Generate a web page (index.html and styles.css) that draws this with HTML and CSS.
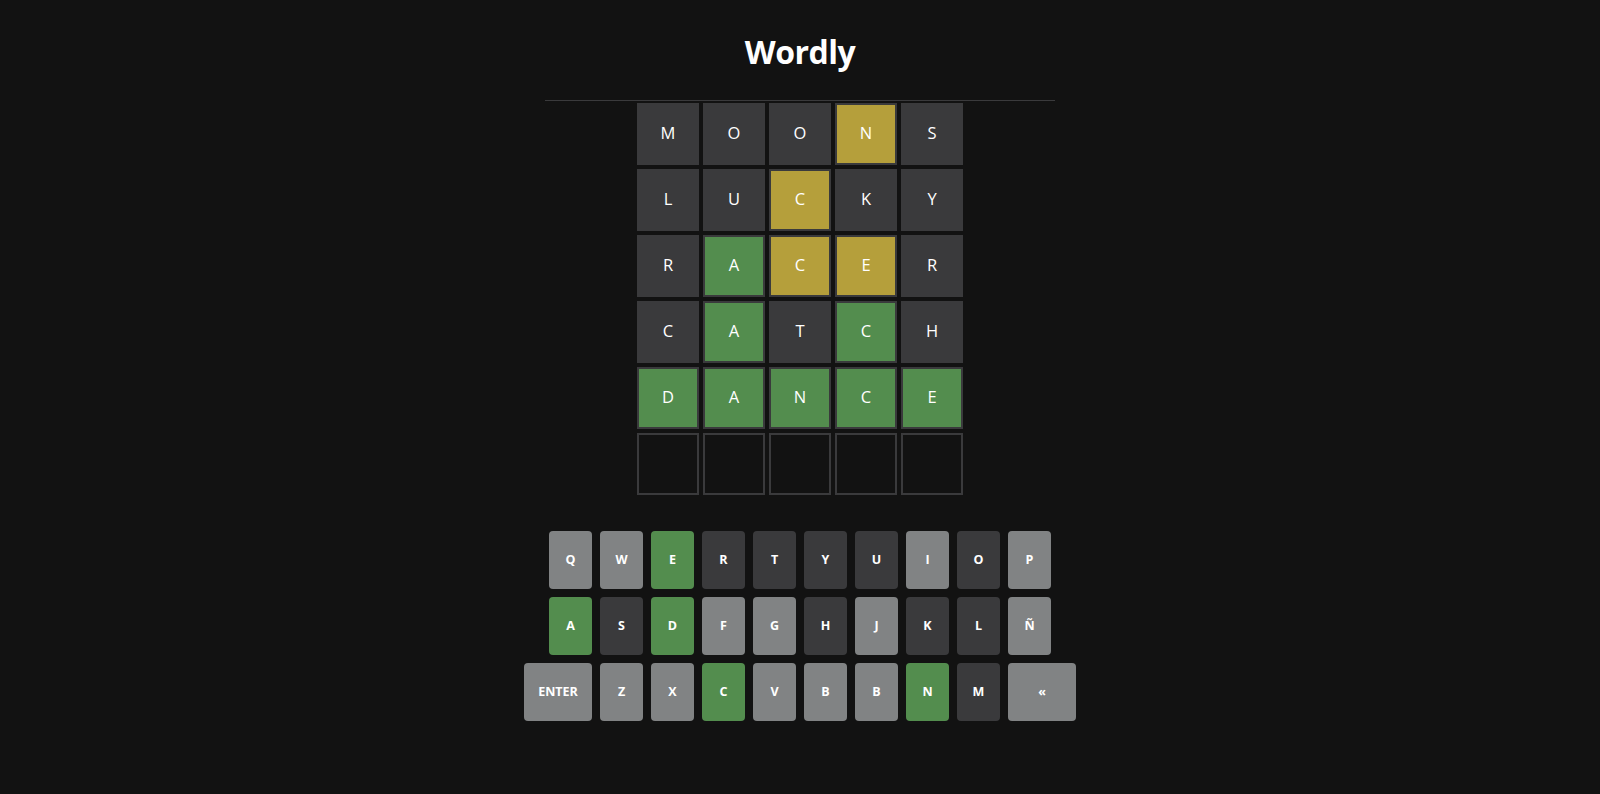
FILE: index.html
```html
<!DOCTYPE html>
<html lang="en">
<head>
<meta charset="utf-8">
<title>Wordly</title>
<link rel="stylesheet" href="styles.css">
</head>
<body>
<div class="app">
  <header class="header">
    <h1 class="title">Wordly</h1>
  </header>
  <main class="board">
    <div class="row">
      <div class="tile absent">M</div><div class="tile absent">O</div><div class="tile absent">O</div><div class="tile present">N</div><div class="tile absent">S</div>
    </div>
    <div class="row">
      <div class="tile absent">L</div><div class="tile absent">U</div><div class="tile present">C</div><div class="tile absent">K</div><div class="tile absent">Y</div>
    </div>
    <div class="row">
      <div class="tile absent">R</div><div class="tile correct">A</div><div class="tile present">C</div><div class="tile present">E</div><div class="tile absent">R</div>
    </div>
    <div class="row">
      <div class="tile absent">C</div><div class="tile correct">A</div><div class="tile absent">T</div><div class="tile correct">C</div><div class="tile absent">H</div>
    </div>
    <div class="row">
      <div class="tile correct">D</div><div class="tile correct">A</div><div class="tile correct">N</div><div class="tile correct">C</div><div class="tile correct">E</div>
    </div>
    <div class="row">
      <div class="tile"></div><div class="tile"></div><div class="tile"></div><div class="tile"></div><div class="tile"></div>
    </div>
  </main>
  <section class="keyboard">
    <div class="krow">
      <button class="key">Q</button><button class="key">W</button><button class="key k-correct">E</button><button class="key k-absent">R</button><button class="key k-absent">T</button><button class="key k-absent">Y</button><button class="key k-absent">U</button><button class="key">I</button><button class="key k-absent">O</button><button class="key">P</button>
    </div>
    <div class="krow">
      <button class="key k-correct">A</button><button class="key k-absent">S</button><button class="key k-correct">D</button><button class="key">F</button><button class="key">G</button><button class="key k-absent">H</button><button class="key">J</button><button class="key k-absent">K</button><button class="key k-absent">L</button><button class="key">Ñ</button>
    </div>
    <div class="krow">
      <button class="key wide">ENTER</button><button class="key">Z</button><button class="key">X</button><button class="key k-correct">C</button><button class="key">V</button><button class="key">B</button><button class="key">B</button><button class="key k-correct">N</button><button class="key k-absent">M</button><button class="key wide">«</button>
    </div>
  </section>
</div>
</body>
</html>
```
FILE: styles.css
```css
html, body {
  margin: 0;
  padding: 0;
  background: #121212;
  color: #ffffff;
  font-family: "Open Sans", "Noto Sans", sans-serif;
}

.app {
  display: flex;
  flex-direction: column;
  align-items: center;
}

.header {
  width: 510px;
  border-bottom: 1px solid #3a3a3c;
  display: flex;
  justify-content: center;
}

.title {
  margin: 30px 0 26px;
  font-size: 32px;
  line-height: 44px;
  font-weight: 700;
  letter-spacing: -0.5px;
}

.board {
  display: flex;
  flex-direction: column;
  gap: 4px;
  margin-top: 2px;
}

.row {
  display: flex;
  gap: 4px;
}

.tile {
  box-sizing: border-box;
  width: 62px;
  height: 62px;
  border: 2px solid #3a3a3c;
  padding-bottom: 3px;
  display: flex;
  align-items: center;
  justify-content: center;
  font-size: 16.5px;
  font-weight: 400;
  color: #ffffff;
}

.tile.absent {
  background: #3a3a3c;
}

.tile.present {
  background: #b59f3b;
}

.tile.correct {
  background: #538d4e;
}

.keyboard {
  margin-top: 36px;
  display: flex;
  flex-direction: column;
  gap: 8px;
  align-items: center;
}

.krow {
  display: flex;
  gap: 8px;
}

.key {
  width: 43px;
  height: 58px;
  border: 0;
  border-radius: 4px;
  background: #818384;
  color: #ffffff;
  font-family: "Open Sans", "Noto Sans", sans-serif;
  font-size: 12.5px;
  font-weight: 700;
  padding: 0 0 1px;
  display: flex;
  align-items: center;
  justify-content: center;
}

.key.wide {
  width: 68px;
}

.key.k-absent {
  background: #3a3a3c;
}

.key.k-correct {
  background: #538d4e;
}
```
